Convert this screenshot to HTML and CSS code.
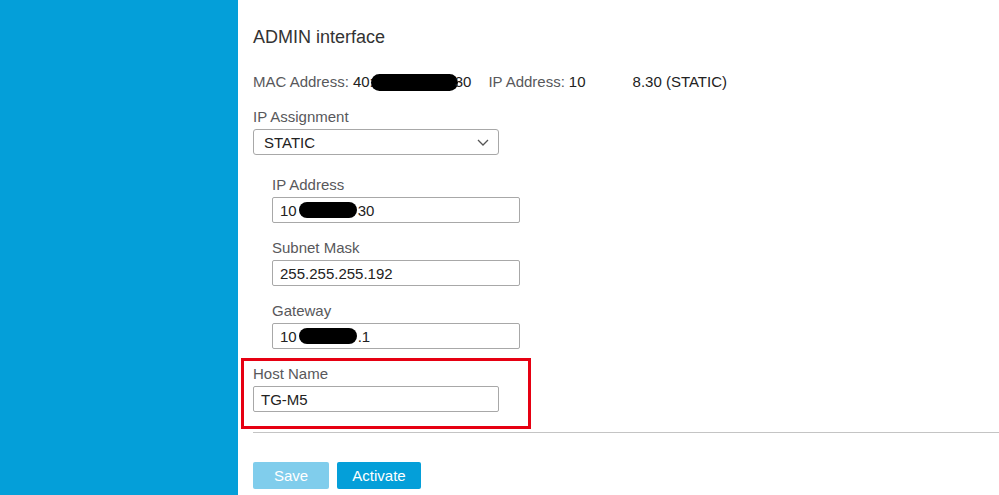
FILE: index.html
```html
<!DOCTYPE html>
<html lang="en">
<head>
    <meta charset="UTF-8">
    <title>ADMIN interface</title>
    <link rel="stylesheet" href="styles.css">
</head>
<body>
<div class="layout">
    <div class="sidebar"></div>
    <div class="main">
        <h2 class="title">ADMIN interface</h2>

        <div class="summary">
            <span class="key">MAC Address:</span>
            <span class="val">40:<span class="blot mac-blot"></span>30</span>
            <span class="key ip-key">IP Address:</span>
            <span class="val">10<span class="hidden-gap"></span>8.30 (STATIC)</span>
        </div>

        <div class="field">
            <label class="label">IP Assignment</label>
            <div class="select">
                <span>STATIC</span>
                <svg class="chevron" width="12" height="7" viewBox="0 0 12 7"><path d="M1 1l5 5 5-5" fill="none" stroke="#555" stroke-width="1.3"/></svg>
            </div>
        </div>

        <div class="static-group">
            <div class="field">
                <label class="label">IP Address</label>
                <div class="input wide">10<span class="blot ip-blot"></span>30</div>
            </div>
            <div class="field">
                <label class="label">Subnet Mask</label>
                <div class="input wide">255.255.255.192</div>
            </div>
            <div class="field">
                <label class="label">Gateway</label>
                <div class="input wide">10<span class="blot ip-blot"></span>.1</div>
            </div>
        </div>

        <div class="highlight">
            <div class="field">
                <label class="label">Host Name</label>
                <div class="input">TG-M5</div>
            </div>
        </div>

        <hr class="divider">

        <div class="actions">
            <button class="btn disabled">Save</button>
            <button class="btn">Activate</button>
        </div>
    </div>
</div>
</body>
</html>
```

FILE: styles.css
```css
body {
    margin: 0;
    font-family: "Liberation Sans", Arial, sans-serif;
    font-size: 15px;
    color: #333;
    background: #fff;
}
.layout {
    display: flex;
    height: 495px;
    overflow: hidden;
}
.sidebar {
    width: 238px;
    flex-shrink: 0;
    background: #049fd9;
}
.main {
    flex: 1;
    padding-left: 15px;
}
.title {
    margin: 27px 0 0;
    font-size: 18px;
    font-weight: normal;
    line-height: 21px;
    color: #333;
}
.summary {
    margin-top: 25px;
    line-height: 18px;
    display: flex;
    align-items: center;
    white-space: nowrap;
}
.key {
    color: #58585b;
    margin-right: 4px;
}
.val {
    color: #222;
    display: flex;
    align-items: center;
}
.ip-key {
    margin-left: 17px;
}
.hidden-gap {
    display: inline-block;
    width: 47px;
}
.blot {
    display: inline-block;
    background: #000;
    border-radius: 9px;
}
.mac-blot {
    width: 87px;
    height: 17px;
    margin: 0 -3px 0 -3px;
}
.ip-blot {
    width: 58px;
    height: 16px;
    margin: 0 1px 0 2px;
}
.field {
    display: flex;
    flex-direction: column;
}
.label {
    color: #58585b;
    line-height: 18px;
    margin-bottom: 3px;
}
.summary + .field {
    margin-top: 17px;
}
.select {
    width: 246px;
    height: 26px;
    box-sizing: border-box;
    border: 1px solid #a8a8a8;
    border-radius: 3px;
    padding: 0 10px;
    display: flex;
    align-items: center;
    justify-content: space-between;
    color: #222;
}
.chevron {
    margin-right: -1px;
}
.static-group {
    padding-left: 19px;
    margin-top: 21px;
    display: flex;
    flex-direction: column;
    gap: 16px;
}
.input {
    width: 246px;
    height: 26px;
    box-sizing: border-box;
    border: 1px solid #a8a8a8;
    border-radius: 2px;
    padding: 0 7px;
    display: flex;
    align-items: center;
    color: #222;
}
.input.wide {
    width: 248px;
}
.highlight {
    margin: 9px 0 0 -12px;
    width: 290px;
    height: 71px;
    box-sizing: border-box;
    border: 3px solid #e60012;
    padding: 4px 0 0 9px;
}
.divider {
    margin: 3px 0 0;
    border: 0;
    border-top: 1px solid #c4c4c4;
}
.actions {
    margin-top: 29px;
    display: flex;
    gap: 8px;
}
.btn {
    height: 27px;
    padding: 0;
    border: 0;
    border-radius: 2px;
    background: #049fd9;
    color: #fff;
    font-family: "Liberation Sans", Arial, sans-serif;
    font-size: 15px;
    width: 84px;
}
.btn.disabled {
    background: #80cdec;
    width: 76px;
}
```
